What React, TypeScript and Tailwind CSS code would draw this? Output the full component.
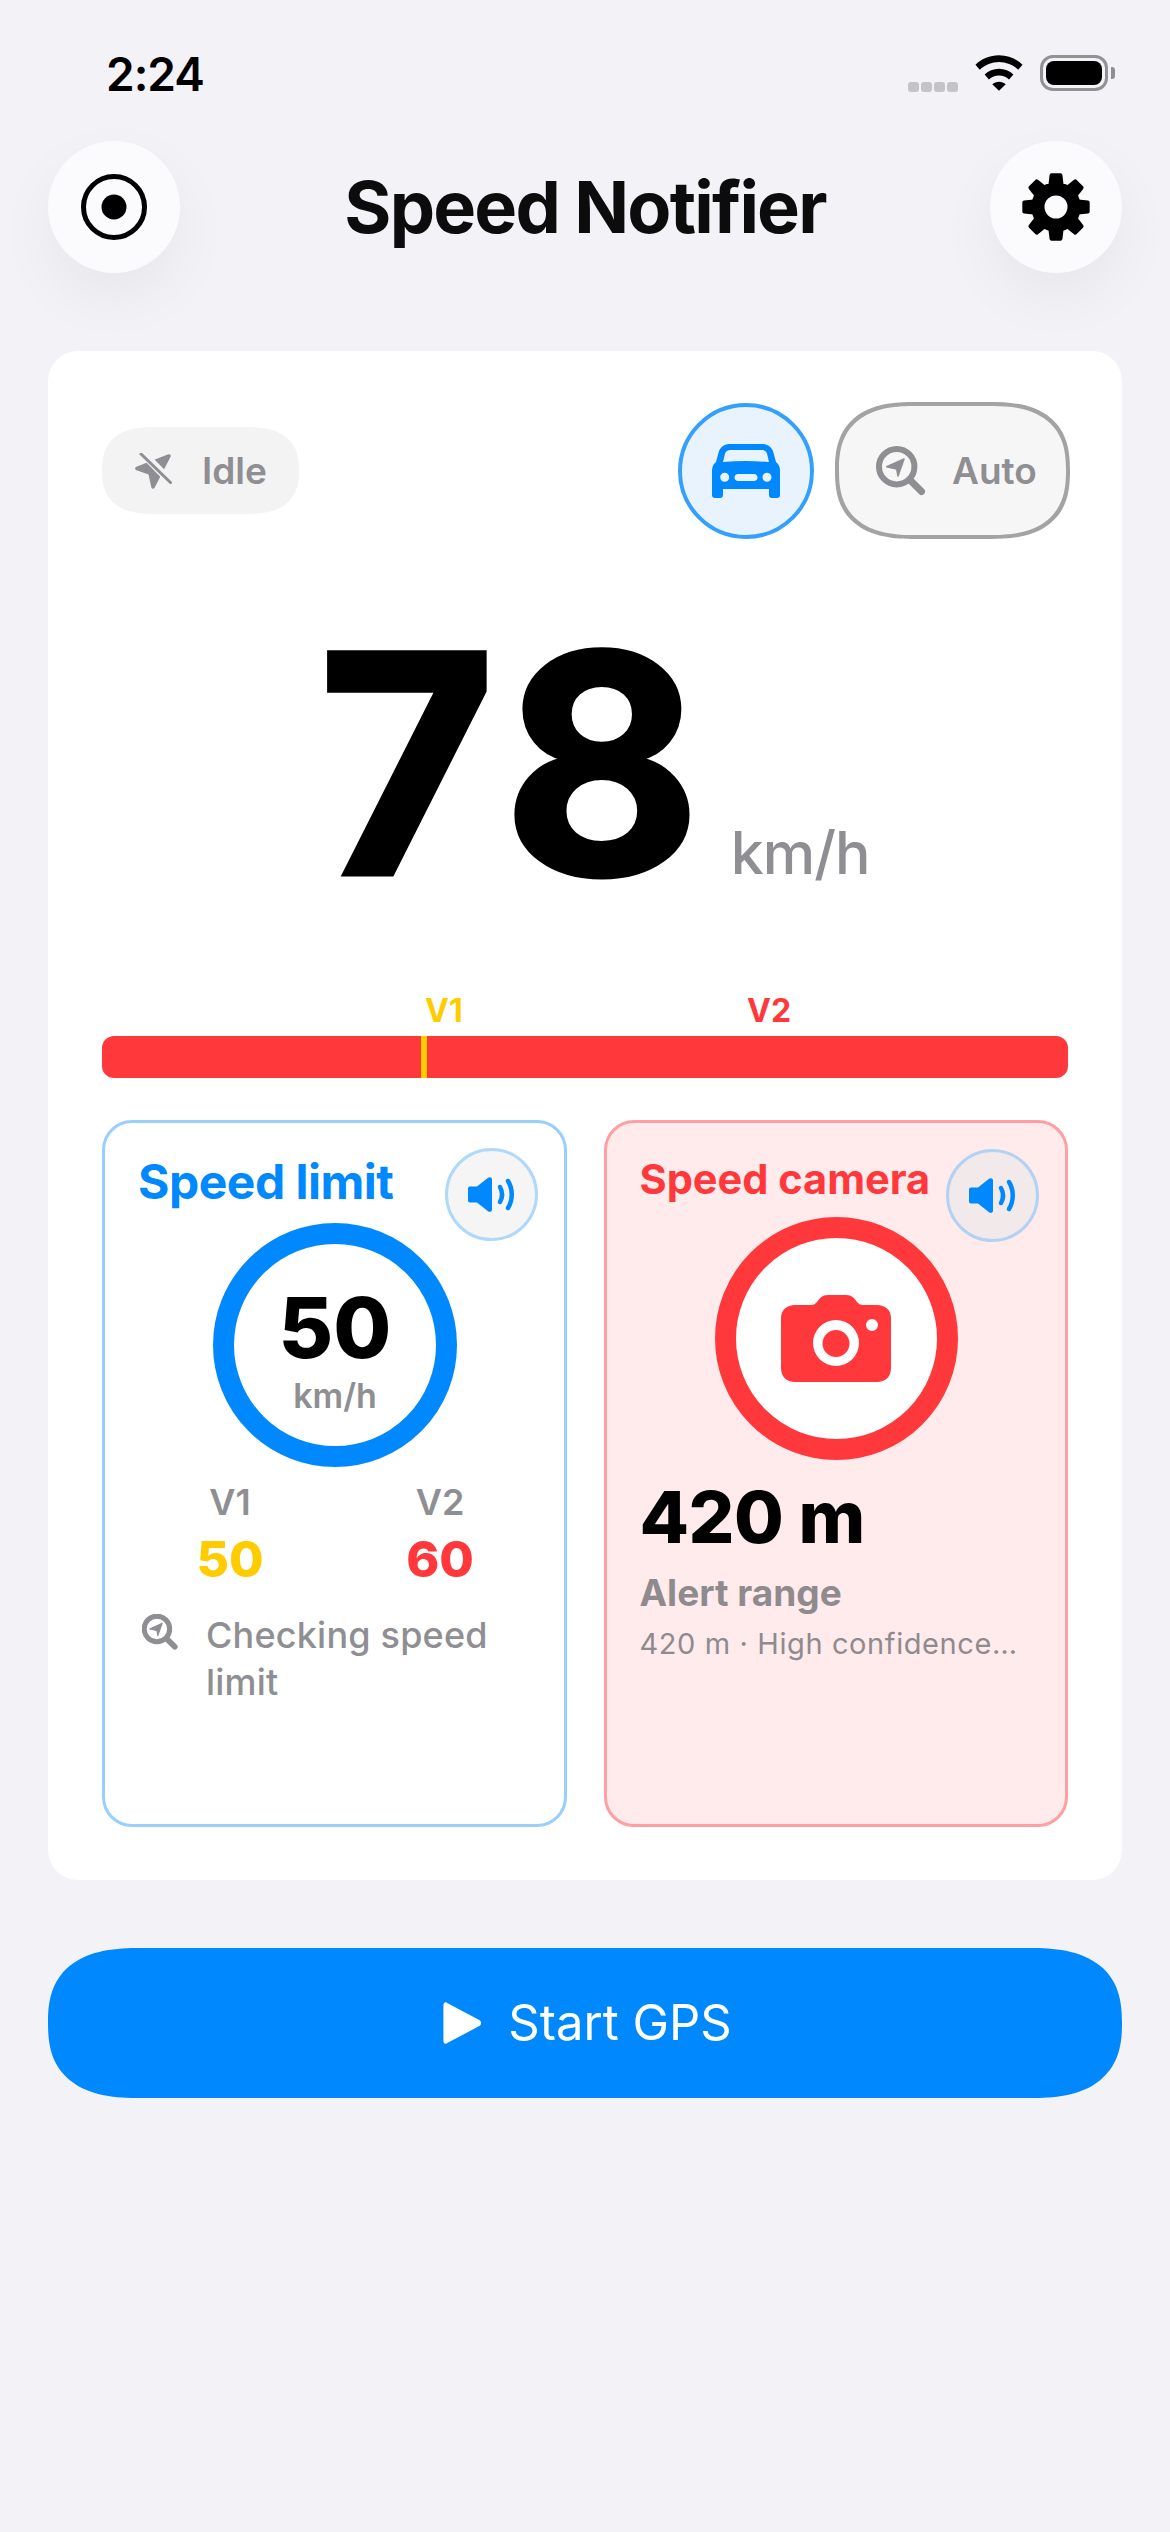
const font = "font-['Inter','Liberation_Sans',sans-serif]";

// 8 rounded teeth, the round stroke does the corner softening
function gearPath() {
  const cx = 36;
  const cy = 36;
  const pts: string[] = [];
  for (let i = 0; i < 8; i++) {
    const a = (i * Math.PI) / 4 - Math.PI / 2;
    const at = (r: number, d: number) => {
      const t = a + (d * Math.PI) / 180;
      return `${(cx + r * Math.cos(t)).toFixed(2)} ${(cy + r * Math.sin(t)).toFixed(2)}`;
    };
    pts.push(at(23, -14), at(32, -8), at(32, 8), at(23, 14));
  }
  return `M${pts.join("L")}Z M${cx - 13.5} ${cy}a13.500 13.500 0 1 0 27 0a13.500 13.500 0 1 0 -27 0Z`;
}

function Speaker() {
  return (
    <svg width="47" height="35" viewBox="0 0 47 35" fill="none">
      <path d="M0 11.500a2 2 0 0 1 2-2h7L20 .8c1.500-1.300 4-.6 4 1.500v30.400c0 2.100-2.500 2.800-4 1.500L9 25.500H2a2 2 0 0 1-2-2z" fill="#0088ff" />
      <path d="M32 10c2.500 4.500 2.500 10.500 0 15" stroke="#0088ff" strokeWidth="4.500" strokeLinecap="round" />
      <path d="M40 4c5 8 5 19 0 27" stroke="#0088ff" strokeWidth="4.500" strokeLinecap="round" />
    </svg>
  );
}

function SearchNav({ size, stroke }: { size: number; stroke: number }) {
  return (
    <svg width={size} height={size} viewBox="0 0 50 50" fill="none">
      <circle cx="20.700" cy="20.700" r="17.700" stroke="#8e8e93" strokeWidth={stroke} />
      <path d="M34 34L45.500 45.500" stroke="#8e8e93" strokeWidth={stroke + 1} strokeLinecap="round" />
      <path d="M28 13L10.700 20.700L20.700 23L22 30Z" fill="#8e8e93" stroke="#8e8e93" strokeWidth="1.500" strokeLinejoin="round" />
    </svg>
  );
}

export default function App() {
  return (
    <div className={`${font} w-full min-h-[2532px] bg-[#f2f2f7] text-black`}>
      <div className="h-[141px] flex justify-between pl-[106px] pr-[55px] pt-[47px]">
        <span className="text-[46px] leading-[54px] font-semibold tracking-[-1px]">2:24</span>
        <div className="flex items-start gap-[17px] pt-[8px]">
          <div className="flex gap-[2px] mt-[27px]">
            <span className="w-[11px] h-[10px] rounded-[3px] bg-[#c4c4c8]" />
            <span className="w-[11px] h-[10px] rounded-[3px] bg-[#c4c4c8]" />
            <span className="w-[11px] h-[10px] rounded-[3px] bg-[#c4c4c8]" />
            <span className="w-[11px] h-[10px] rounded-[3px] bg-[#c4c4c8]" />
          </div>
          <svg width="48" height="36" viewBox="0 0 50 37">
            <path d="M25 0c9.500 0 18 3.700 24.500 9.800L45 15C39.500 10 32.500 7 25 7S10.500 10 5 15L.5 9.800C7 3.700 15.500 0 25 0z" />
            <path d="M25 14c5.800 0 11 2.300 15 6l-4.500 5.200C32.700 22.600 29 21 25 21s-7.700 1.600-10.500 4.200L10 20c4-3.700 9.200-6 15-6z" />
            <path d="M25 27.500c2.700 0 5.200 1 7 2.700L25 37l-7-6.800c1.800-1.700 4.300-2.700 7-2.700z" />
          </svg>
          <div className="flex items-center gap-[3px]">
            <div className="w-[68px] h-[36px] rounded-[13px] border-[3px] border-[#929296] p-[3px]">
              <div className="w-full h-full rounded-[8px] bg-black" />
            </div>
            <span className="w-[4px] h-[12px] rounded-r-[3px] bg-[#8e8e93]" />
          </div>
        </div>
      </div>

      <div className="h-[132px] flex items-center justify-between px-[48px]">
        <button className="w-[132px] h-[132px] rounded-full bg-[#fbfbfe] shadow-[0_24px_60px_rgba(0,0,0,0.05)] flex items-center justify-center">
          <svg width="66" height="66" viewBox="0 0 66 66" fill="none">
            <circle cx="33" cy="33" r="30.500" stroke="#000" strokeWidth="5" />
            <circle cx="33" cy="33" r="12.500" fill="#000" />
          </svg>
        </button>
        <h1 className="text-[72px] leading-[88px] font-bold text-[#0c0c0c] tracking-[-1.800px]">Speed Notifier</h1>
        <button className="w-[132px] h-[132px] rounded-full bg-[#fbfbfe] shadow-[0_24px_60px_rgba(0,0,0,0.05)] flex items-center justify-center">
          <svg width="72" height="72" viewBox="0 0 72 72">
            <path d={gearPath()} fill="#000" stroke="#000" strokeWidth="4" strokeLinejoin="round" fillRule="evenodd" />
          </svg>
        </button>
      </div>

      <div className="mx-[48px] mt-[78px] h-[1529px] rounded-[30px] bg-white pt-[51px] px-[54px]">
        <div className="flex items-center justify-between">
          <div className="w-[197px] h-[87px] rounded-[54px/44px] [corner-shape:superellipse(1.35)] bg-[#f3f3f3] flex items-center pl-[33px] gap-[30px]">
            <svg width="37" height="36" viewBox="0 0 37 36" fill="none">
              <path d="M34 3L2 15.500L15 20L18 34Z" fill="#8e8e93" stroke="#8e8e93" strokeWidth="3.500" strokeLinejoin="round" />
              <path d="M6.500 -1L37 30" stroke="#f3f3f3" strokeWidth="8" />
              <path d="M6 1L35.500 29.500" stroke="#8e8e93" strokeWidth="3" strokeLinecap="round" />
            </svg>
            <span className="text-[37px] font-semibold text-[#8e8e93]">Idle</span>
          </div>
          <div className="flex items-center gap-[21px] mr-[-2px]">
            <button className="w-[136px] h-[136px] rounded-full border-[4px] border-[#33a0ff] bg-[#e8f3fe] flex items-center justify-center">
              <svg width="68" height="54" viewBox="0 0 68 54">
                <path
                  fillRule="evenodd"
                  fill="#0088ff"
                  d="M18 0h32c5 0 9 2.500 11 7l3 11 2 2c1.300 2 2 4 2 7v24c0 2-1 3-3 3h-5c-2 0-3-1-3-3v-6H11v6c0 2-1 3-3 3H3c-2 0-3-1-3-3V27c0-3 .7-5 2-7l2-2 3-11C9 2.500 13 0 18 0zM19 6c-3 0-5 1-6 3.500L11 18c15-1.200 31-1.200 46 0l-2-8.500C54 7 52 6 49 6zM12.700 28.800a4.500 4.500 0 1 0 0 9 4.500 4.500 0 0 0 0-9zM55 28.800a4.500 4.500 0 1 0 0 9 4.500 4.500 0 0 0 0-9zM26 30c-2 0-3.500 1.500-3.500 3.500S24 37 26 37h16c2 0 3.500-1.500 3.500-3.500S44 30 42 30z"
                />
              </svg>
            </button>
            <button className="w-[235px] h-[137px] rounded-[80px/68px] [corner-shape:superellipse(1.35)] border-[4px] border-[#a3a3a3] bg-[#f6f6f6] flex items-center pl-[37px] gap-[26px]">
              <SearchNav size={50} stroke={6} />
              <span className="text-[37px] font-semibold text-[#8e8e93]">Auto</span>
            </button>
          </div>
        </div>

        <div className="flex justify-center items-baseline mt-[84px] h-[280px] pl-[18px]">
          <span className="text-[304px] leading-[280px] font-bold tracking-[12px] [-webkit-text-stroke:5px_#000]">78</span>
          <span className="text-[59px] leading-[70px] font-medium text-[#8e8e93] ml-[18px] tracking-[-1px]">km/h</span>
        </div>

        <div className="relative mt-[133px] h-[42px] rounded-[12px] bg-[#ff383c]">
          <span className="absolute left-[319px] top-0 w-[6px] h-[42px] bg-[#ffcc00]" />
          <span className="absolute left-[323px] top-[-43px] text-[32px] leading-[36px] font-bold text-[#ffcc00]">V1</span>
          <span className="absolute left-[645px] top-[-43px] text-[32px] leading-[36px] font-bold text-[#ff383c]">V2</span>
        </div>

        <div className="mt-[42px] grid grid-cols-2 gap-[37px] h-[707px]">
          <div className="relative rounded-[30px] border-[3px] border-[#99cfff] px-[35px] pt-[32px]">
            <h2 className="text-[48px] leading-[54px] font-bold text-[#0088ff] tracking-[-0.500px] ml-[-2px]">Speed limit</h2>
            <button className="absolute right-[26px] top-[25px] w-[93px] h-[93px] rounded-full border-[3px] border-[#b0d8fa] bg-[#f5f5f6] flex items-center justify-center">
              <Speaker />
            </button>
            <div className="mt-[14px] ml-[73px] w-[244px] h-[244px] rounded-full border-[21px] border-[#0088ff] flex flex-col items-center justify-center pt-[11px]">
              <span className="text-[84px] leading-[86px] font-extrabold">50</span>
              <span className="text-[34px] leading-[40px] mt-[5px] font-semibold text-[#8e8e93]">km/h</span>
            </div>
            <div className="mt-[13px] flex pl-[58px] gap-[146px]">
              <div className="flex flex-col items-center w-[64px]">
                <span className="text-[36px] leading-[44px] font-semibold text-[#8e8e93]">V1</span>
                <span className="text-[50px] leading-[60px] mt-[5px] font-extrabold text-[#ffcc00]">50</span>
              </div>
              <div className="flex flex-col items-center w-[64px]">
                <span className="text-[36px] leading-[44px] font-semibold text-[#8e8e93]">V2</span>
                <span className="text-[50px] leading-[60px] mt-[5px] font-extrabold text-[#ff383c]">60</span>
              </div>
            </div>
            <div className="mt-[23px] flex items-start gap-[29px] pl-[2px]">
              <div className="mt-[2px] shrink-0">
                <SearchNav size={36} stroke={7} />
              </div>
              <span className="text-[36px] leading-[47px] font-medium text-[#8e8e93] w-[310px] tracking-[0.2px] ml-[-1px]">Checking speed limit</span>
            </div>
          </div>

          <div className="relative rounded-[30px] border-[3px] border-[#ff9fa3] bg-[#ffebec] px-[33px] pt-[32px]">
            <h2 className="text-[41.500px] leading-[48px] font-bold text-[#ff383c] whitespace-nowrap">Speed camera</h2>
            <button className="absolute right-[26px] top-[26px] w-[93px] h-[93px] rounded-full border-[3px] border-[#b3d2f2] bg-[#f2e9ea] flex items-center justify-center">
              <Speaker />
            </button>
            <div className="mt-[14px] ml-[75px] w-[243px] h-[243px] rounded-full border-[21px] border-[#ff383c] bg-white flex items-center justify-center">
              <svg width="110" height="87" viewBox="0 0 110 87">
                <path fillRule="evenodd" d="M14 10h16c3 0 4-1 6-3 3-4 5-7 11-7h18c6 0 8 3 11 7 2 2 3 3 6 3h14c8 0 14 5 14 13v50c0 9-6 14-14 14H14C6 87 0 82 0 73V23C0 15 6 10 14 10zM55 25a23 23 0 1 0 0 46 23 23 0 0 0 0-46zm0 10a13.500 13.500 0 1 1 0 27 13.500 13.500 0 0 1 0-27zm36-11a6 6 0 1 0 0 12 6 6 0 0 0 0-12z" fill="#ff383c" />
              </svg>
            </div>
            <div className="mt-[14px] text-[72px] leading-[86px] font-extrabold tracking-[-0.500px]">420 m</div>
            <div className="mt-[11px] text-[37px] leading-[44px] font-bold text-[#8f8a8d]">Alert range</div>
            <div className="mt-[11px] text-[29px] leading-[36px] tracking-[0.600px] text-[#8f8a8d] whitespace-nowrap">420 m · High confidence…</div>
          </div>
        </div>
      </div>

      <button className="mx-[48px] mt-[68px] w-[1074px] h-[150px] rounded-[92px/75px] [corner-shape:superellipse(1.35)] bg-[#0088ff] flex items-center justify-center gap-[26px] pl-[5px] text-white">
        <svg width="39" height="42" viewBox="0 0 40 44">
          <path d="M0 3.500C0 .5 2.500-.8 4.500 1.200L38 19c2 1.500 2 4.500 0 6L4.500 42.800C2.500 44.800 0 43.500 0 40.500z" fill="#fff" />
        </svg>
        <span className="text-[49px] leading-[58px] font-normal">Start GPS</span>
      </button>
    </div>
  );
}
